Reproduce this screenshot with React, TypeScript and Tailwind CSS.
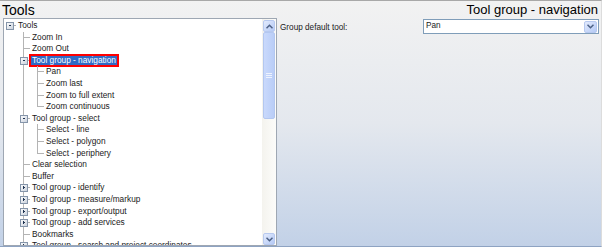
import React from 'react';

type Node = {
  label: string;
  level: number;
  box?: '+' | '-';
  last?: boolean;
  selected?: boolean;
};

const nodes: Node[] = [
  { label: 'Tools', level: 0, box: '-' },
  { label: 'Zoom In', level: 1 },
  { label: 'Zoom Out', level: 1 },
  { label: 'Tool group - navigation', level: 1, box: '-', selected: true },
  { label: 'Pan', level: 2 },
  { label: 'Zoom last', level: 2 },
  { label: 'Zoom to full extent', level: 2 },
  { label: 'Zoom continuous', level: 2, last: true },
  { label: 'Tool group - select', level: 1, box: '-' },
  { label: 'Select - line', level: 2 },
  { label: 'Select - polygon', level: 2 },
  { label: 'Select - periphery', level: 2, last: true },
  { label: 'Clear selection', level: 1 },
  { label: 'Buffer', level: 1 },
  { label: 'Tool group - identify', level: 1, box: '+' },
  { label: 'Tool group - measure/markup', level: 1, box: '+' },
  { label: 'Tool group - export/output', level: 1, box: '+' },
  { label: 'Tool group - add services', level: 1, box: '+' },
  { label: 'Bookmarks', level: 1 },
  { label: 'Tool group - search and project coordinates', level: 1, box: '+' },
];

const H = 11.6;
const LINE = '#b4b4b4';

// one column of tree lines: 'pass' = vertical line through, 'node' = connector for the item
const LineCol = ({
  kind,
  root,
  last,
  box,
  width,
}: {
  kind: 'pass' | 'node';
  root?: boolean;
  last?: boolean;
  box?: '+' | '-';
  width: number;
}) => {
  const cx = width === 12 ? 5.5 : 7.5;
  const cy = 5.5;
  return (
    <svg width={width} height={H} viewBox={`0 0 ${width} ${H}`} className="flex-none" shapeRendering="crispEdges">
      {kind === 'pass' && <line x1={cx} y1={0} x2={cx} y2={H} stroke={LINE} />}
      {kind === 'node' && (
        <>
          {!root && <line x1={cx} y1={0} x2={cx} y2={last ? cy + 0.5 : H} stroke={LINE} />}
          <line x1={cx} y1={cy + 0.5} x2={width} y2={cy + 0.5} stroke={LINE} />
          {box && (
            <>
              <defs>
                <linearGradient id="bx" x1="0" y1="0" x2="1" y2="1">
                  <stop offset="0" stopColor="#ffffff" />
                  <stop offset="1" stopColor="#c6ceda" />
                </linearGradient>
              </defs>
              <rect x={cx - 3} y={cy - 3} width={7} height={7} fill="url(#bx)" stroke="#8595aa" />
              <line x1={cx - 1} y1={cy + 0.5} x2={cx + 2} y2={cy + 0.5} stroke="#1e3250" />
              {box === '+' && <line x1={cx + 0.5} y1={cy - 1} x2={cx + 0.5} y2={cy + 2} stroke="#1e3250" />}
            </>
          )}
        </>
      )}
    </svg>
  );
};

const TreeRow = ({ node }: { node: Node }) => {
  const cols: React.ReactNode[] = [];
  if (node.level === 0) {
    cols.push(<LineCol key="c0" kind="node" root box={node.box} width={12} />);
  } else {
    cols.push(<div key="c0" className="w-[12px] flex-none" />);
    if (node.level === 1) {
      cols.push(<LineCol key="c1" kind="node" box={node.box} last={node.last} width={14} />);
    } else {
      cols.push(<LineCol key="c1" kind="pass" width={14} />);
      cols.push(<LineCol key="c2" kind="node" box={node.box} last={node.last} width={14} />);
    }
  }
  return (
    <div className="flex h-[11.6px] items-center whitespace-nowrap">
      {cols}
      <span
        className={
          node.selected
            ? 'border border-[#ff0000] bg-[#316ac5] px-[1px] leading-[9.6px] text-white outline outline-1 outline-[#ff0000]'
            : 'border border-transparent px-[1px] leading-[9.6px] text-[#1a1a1a]'
        }
      >
        {node.label}
      </span>
    </div>
  );
};

const Chevron = ({ up }: { up?: boolean }) => (
  <svg width="7" height="5" viewBox="0 0 7 5">
    <path
      d={up ? 'M0.5 4.2 L3.5 1.2 L6.5 4.2' : 'M0.5 0.8 L3.5 3.8 L6.5 0.8'}
      fill="none"
      stroke="#4d6185"
      strokeWidth="1.5"
    />
  </svg>
);

const ScrollBtn = ({ up }: { up?: boolean }) => (
  <div className="flex h-[12px] w-[12px] items-center justify-center rounded-[2px] border border-[#b7c9ef] bg-gradient-to-br from-[#e3ebfd] to-[#b4c9f5]">
    <Chevron up={up} />
  </div>
);

const App: React.FC = () => {
  return (
    <div
      className="flex h-[247px] w-[602px] flex-col overflow-hidden border-t border-b border-r border-t-[#a8a8a8] border-b-[#8ea3c2] border-r-[#dcdcdc] bg-gradient-to-b from-[#f2f2f2] via-[#e4e8ee] to-[#c2d1e7]"
      style={{ fontFamily: '"Liberation Sans", Arial, sans-serif' }}
    >
      {/* Header */}
      <div className="flex h-[17px] flex-none items-center justify-between pl-[2px] pr-[3px]">
        <span className="text-[14px] leading-none text-black">Tools</span>
        <span className="text-[13px] leading-none text-black">Tool group - navigation</span>
      </div>

      <div className="flex min-h-0 flex-1 pl-[3px]">
        {/* Tree */}
        <div className="flex w-[274px] flex-none border border-[#9ea7b3] bg-white">
          <div className="min-w-0 flex-1 overflow-hidden pt-[1px] text-[8.3px]">
            {nodes.map((n, i) => (
              <TreeRow key={i} node={n} />
            ))}
          </div>
          {/* Scrollbar */}
          <div className="flex w-[14px] flex-none flex-col bg-gradient-to-r from-[#f4f3ee] to-[#fcfcfa] pl-[1px] pr-[1px] pt-[1px]">
            <ScrollBtn up />
            <div className="flex min-h-0 flex-1 flex-col">
              <div className="flex h-[87px] flex-col items-center justify-center rounded-[2px] border border-[#b3c7f0] bg-gradient-to-r from-[#c9d9fc] to-[#b9cdf7]">
                <div className="flex flex-col gap-[1px]">
                  <div className="h-px w-[6px] bg-[#eef3fe]" />
                  <div className="h-px w-[6px] bg-[#eef3fe]" />
                  <div className="h-px w-[6px] bg-[#eef3fe]" />
                </div>
              </div>
            </div>
            <ScrollBtn />
          </div>
        </div>

        {/* Right panel */}
        <div className="flex min-w-0 flex-1 items-start justify-between pl-[3px] pr-[2px] pt-[1px]">
          <span className="mt-[3px] text-[8.2px] text-[#1a1a1a]">Group default tool:</span>
          <div className="flex h-[15px] w-[176px] items-center border border-[#7f9db9] bg-white pl-[2px] pr-[1px]">
            <span className="flex-1 text-[8.2px] text-[#1a1a1a]">Pan</span>
            <div className="flex h-[12px] w-[13px] items-center justify-center rounded-[2px] border border-[#b7c9ef] bg-gradient-to-br from-[#e3ebfd] to-[#b4c9f5]">
              <Chevron />
            </div>
          </div>
        </div>
      </div>
    </div>
  );
};

export default App;
